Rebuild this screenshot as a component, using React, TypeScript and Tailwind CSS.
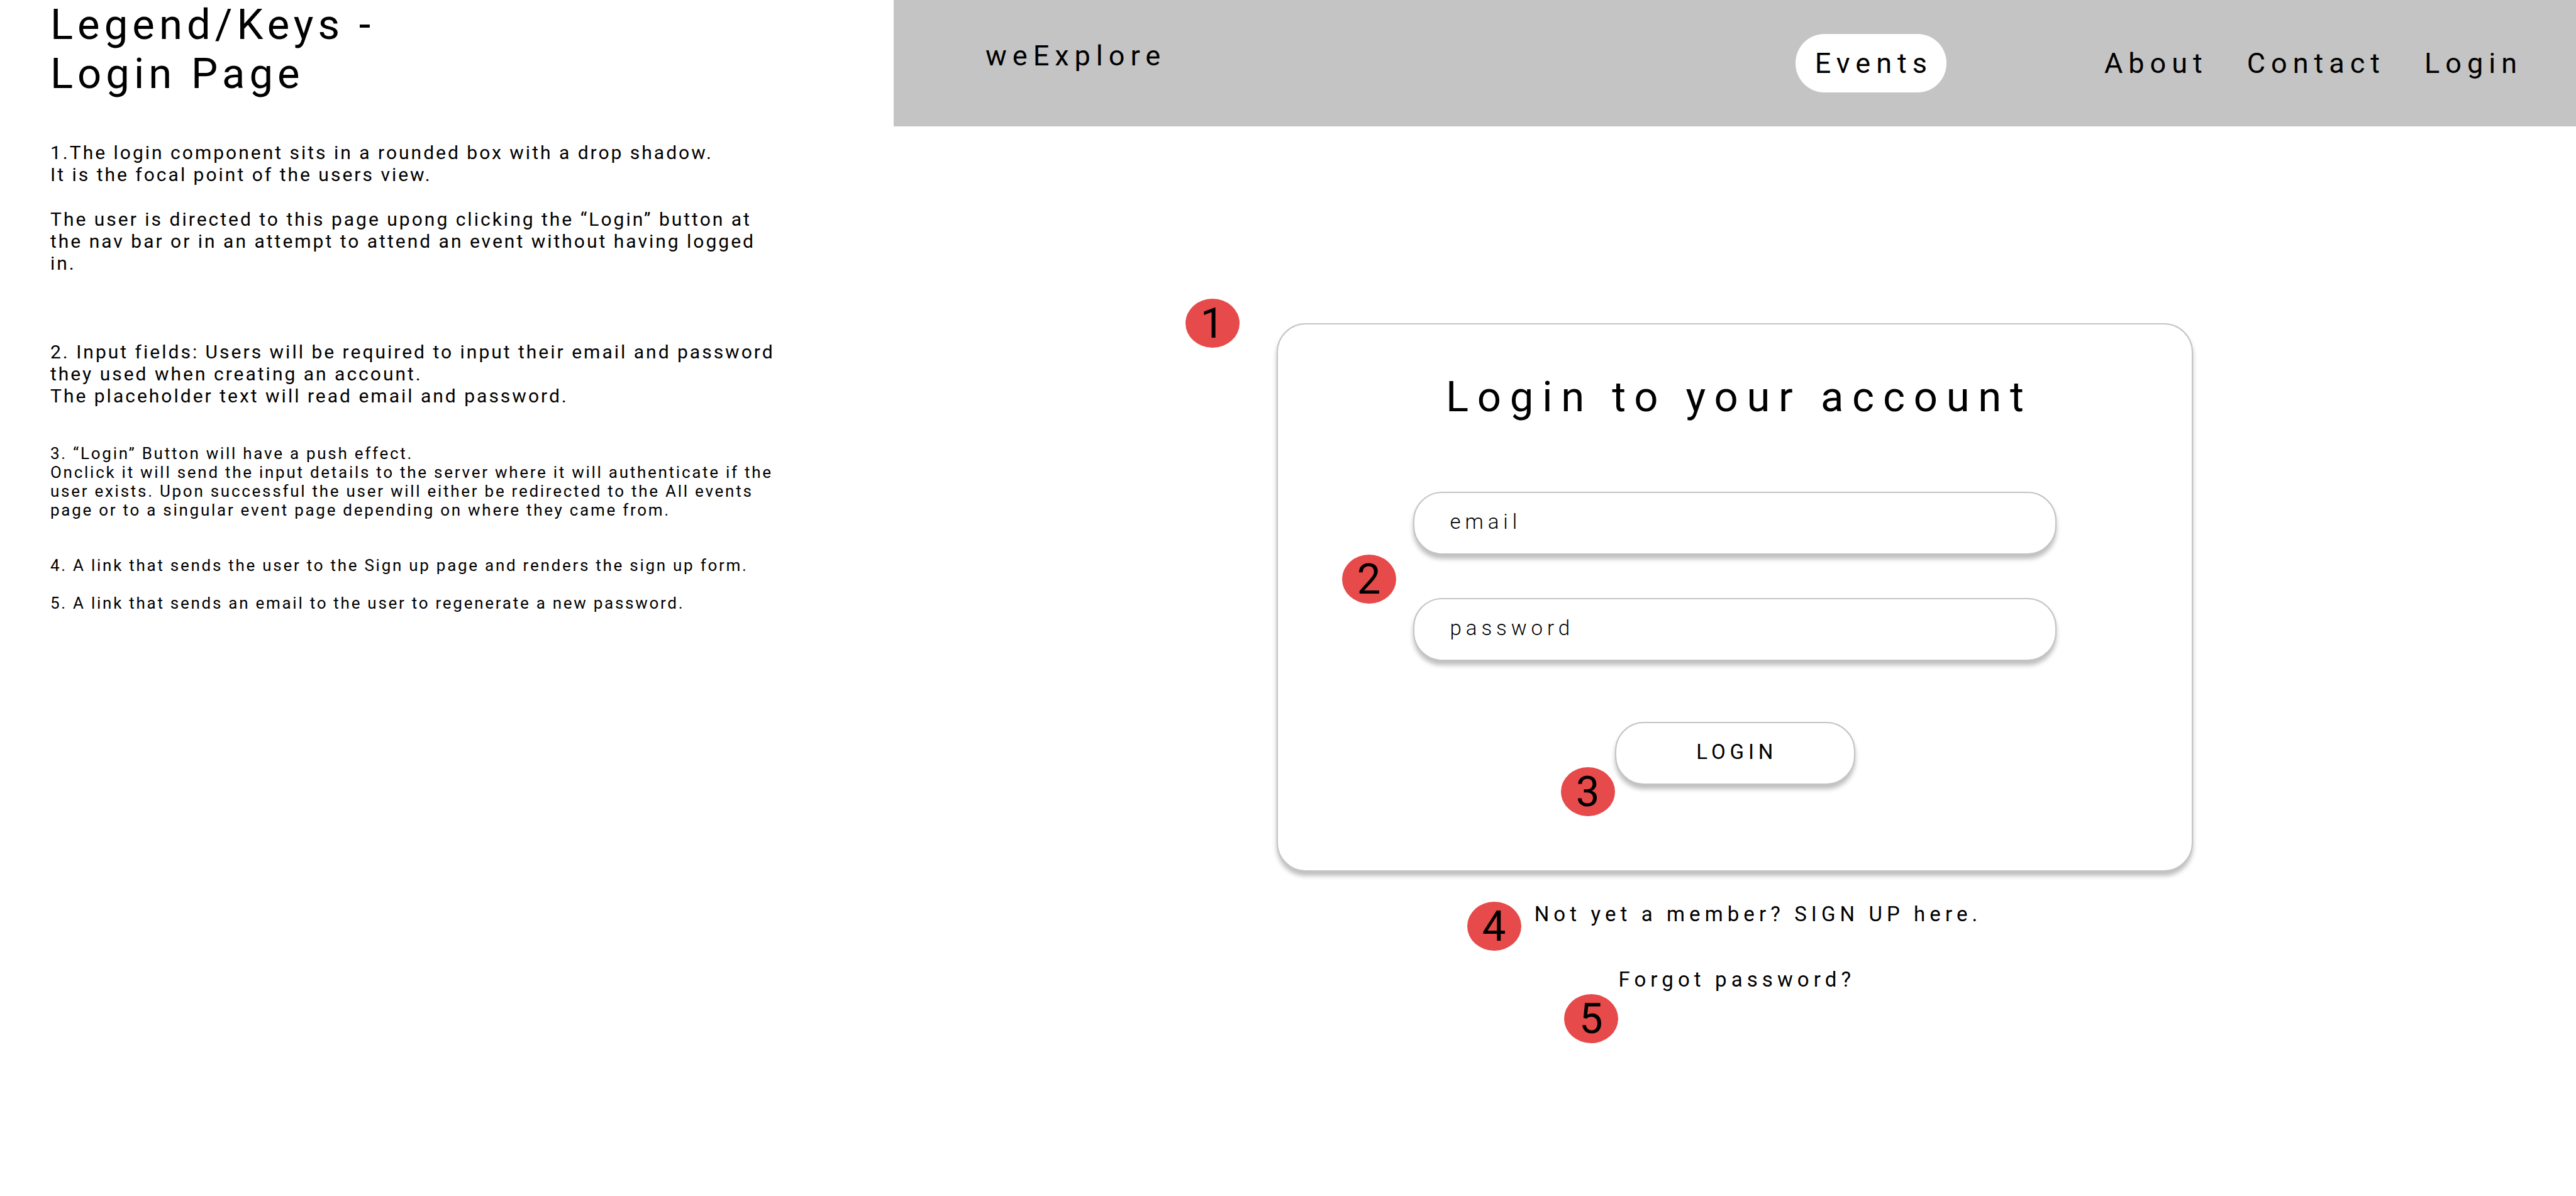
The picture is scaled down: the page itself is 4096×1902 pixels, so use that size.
import React from "react";

function Badge({ n, className }: { n: number; className: string }) {
  return (
    <span
      className={`absolute flex h-[78px] w-[86px] items-center justify-center rounded-[50%] bg-[#e64a4a] text-[67px] leading-[78px] tracking-normal ${className}`}
    >
      {n}
    </span>
  );
}

function Legend() {
  return (
    <aside className="pl-20">
      <h1 className="text-[67px] leading-[78px] tracking-[0.105em]">
        Legend/Keys -
        <br />
        Login Page
      </h1>
      <div className="mt-[69px] w-[1158px] max-w-full text-[30px] leading-[35px] tracking-[0.1em]">
        <p>
          1.The login component sits in a rounded box with a drop shadow.
          <br />
          It is the focal point of the users view.
        </p>
        <p className="mt-9">
          The user is directed to this page upong clicking the “Login” button at the nav bar or in an attempt to
          attend an event without having logged in.
        </p>
        <p className="mt-[106px]">
          2. Input fields: Users will be required to input their email and password they used when creating an
          account.
          <br />
          The placeholder text will read email and password.
        </p>
      </div>
      <div className="mt-[59px] w-[1158px] max-w-full text-[26px] leading-[30px] tracking-[0.105em]">
        <p>
          3. “Login” Button will have a push effect.
          <br />
          Onclick it will send the input details to the server where it will authenticate if the user exists. Upon
          successful the user will either be redirected to the All events page or to a singular event page depending
          on where they came from.
        </p>
        <p className="mt-[58px]">4. A link that sends the user to the Sign up page and renders the sign up form.</p>
        <p className="mt-[30px]">5. A link that sends an email to the user to regenerate a new password.</p>
      </div>
    </aside>
  );
}

function NavBar() {
  return (
    <header className="flex h-[201px] items-center bg-[#c4c4c4] pr-[85px] pl-[146px] text-[45px] leading-[53px] tracking-[0.2em]">
      <a href="#" className="mb-6">
        weExplore
      </a>
      <nav className="ml-auto flex items-center gap-[62px]">
        <a href="#events" className="mr-[189px] w-[240px] rounded-[46px] bg-white py-5 text-center">
          <span className="pl-[0.2em]">Events</span>
        </a>
        <a href="#about">About</a>
        <a href="#contact">Contact</a>
        <a href="#login">Login</a>
      </nav>
    </header>
  );
}

const field =
  "block h-[100px] w-full rounded-[46px] border-2 border-[#c4c4c4] bg-white pr-8 pb-1.5 pl-[57px] text-[33px] font-light tracking-[0.21em] text-black shadow-[0_7px_7px_rgba(0,0,0,0.25)] outline-none placeholder:text-black placeholder:opacity-100";

function LoginCard() {
  return (
    <form
      onSubmit={(e) => e.preventDefault()}
      className="relative mt-[313px] flex w-[54.5%] flex-col items-center rounded-[46px] border-2 border-[#c4c4c4] bg-white px-[215px] pt-[76px] pb-[136px] shadow-[0_7px_7px_rgba(0,0,0,0.25)]"
    >
      <Badge n={1} className="top-[-41px] left-[-147px]" />
      <h2 className="pl-[0.205em] text-[67px] leading-[78px] tracking-[0.205em] whitespace-nowrap">
        Login to your account
      </h2>
      <div className="relative mt-28 flex w-full flex-col gap-[69px]">
        <input type="email" aria-label="email" placeholder="email" className={field} />
        <input type="password" aria-label="password" placeholder="password" className={field} />
        <Badge n={2} className="top-[100px] left-[-113px]" />
      </div>
      <div className="relative mt-[97px]">
        <button
          type="submit"
          className="block h-[100px] w-[382px] rounded-[46px] border-2 border-[#c4c4c4] bg-white pb-1.5 pl-[0.2em] text-[33px] tracking-[0.21em] shadow-[0_7px_7px_rgba(0,0,0,0.25)] active:translate-y-1 active:shadow-none"
        >
          LOGIN
        </button>
        <Badge n={3} className="top-[72px] left-[-86px]" />
      </div>
    </form>
  );
}

export default function App() {
  return (
    <div className="grid min-h-screen grid-cols-[1421fr_2675fr] bg-white font-[Roboto,sans-serif] text-black">
      <Legend />
      <div className="flex min-w-0 flex-col">
        <NavBar />
        <main className="flex flex-col items-center text-[33px] leading-[39px] tracking-[0.215em]">
          <LoginCard />
          <div className="mt-12 pl-[74px]">
            <p className="relative">
              <Badge n={4} className="top-0 left-[-107px]" />
              Not yet a member? <a href="#signup">SIGN UP</a> here.
            </p>
          </div>
          <p className="relative mt-[65px] pl-[0.2em]">
            <a href="#forgot">Forgot password?</a>
            <Badge n={5} className="top-[43px] left-[-80px]" />
          </p>
        </main>
      </div>
    </div>
  );
}
